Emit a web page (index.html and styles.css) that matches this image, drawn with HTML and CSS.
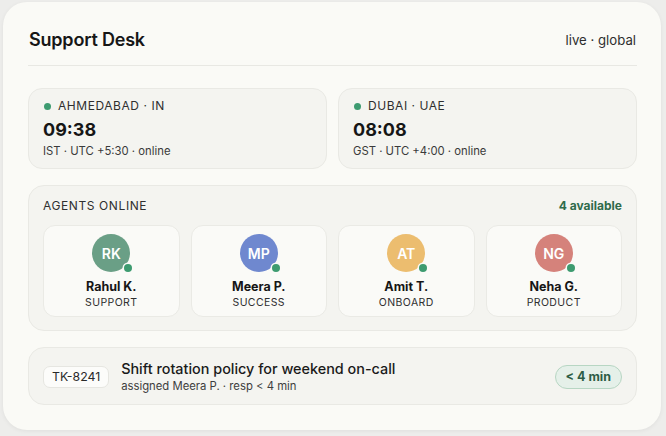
FILE: index.html
```html
<!DOCTYPE html>
<html>
<head>
<meta charset="utf-8">
<link rel="stylesheet" href="styles.css">
</head>
<body>
<div class="card">
  <div class="header">
    <h1 class="title">Support Desk</h1>
    <span class="meta">live · global</span>
  </div>
  <div class="cities">
    <div class="city">
      <div class="city-label"><span class="dot"></span>AHMEDABAD · IN</div>
      <div class="city-time">09:38</div>
      <div class="city-sub">IST · UTC +5:30 · online</div>
    </div>
    <div class="city">
      <div class="city-label"><span class="dot"></span>DUBAI · UAE</div>
      <div class="city-time">08:08</div>
      <div class="city-sub">GST · UTC +4:00 · online</div>
    </div>
  </div>
  <div class="agents">
    <div class="agents-head">
      <span class="agents-label">AGENTS ONLINE</span>
      <span class="agents-count">4 available</span>
    </div>
    <div class="agent-grid">
      <div class="agent">
        <div class="avatar av-green">RK<span class="status"></span></div>
        <div class="agent-name">Rahul K.</div>
        <div class="agent-role">SUPPORT</div>
      </div>
      <div class="agent">
        <div class="avatar av-blue">MP<span class="status"></span></div>
        <div class="agent-name">Meera P.</div>
        <div class="agent-role">SUCCESS</div>
      </div>
      <div class="agent">
        <div class="avatar av-yellow">AT<span class="status"></span></div>
        <div class="agent-name">Amit T.</div>
        <div class="agent-role">ONBOARD</div>
      </div>
      <div class="agent">
        <div class="avatar av-red">NG<span class="status"></span></div>
        <div class="agent-name">Neha G.</div>
        <div class="agent-role">PRODUCT</div>
      </div>
    </div>
  </div>
  <div class="ticket">
    <span class="ticket-id">TK-8241</span>
    <div class="ticket-body">
      <div class="ticket-title">Shift rotation policy for weekend on-call</div>
      <div class="ticket-sub">assigned Meera P. · resp &lt; 4 min</div>
    </div>
    <span class="ticket-badge">&lt; 4 min</span>
  </div>
</div>
</body>
</html>
```
FILE: styles.css
```css
* { box-sizing: border-box; }
html, body { margin: 0; }
body {
  background: #ededeb;
  font-family: Inter, "Noto Sans", "Liberation Sans", sans-serif;
  color: #1b1b1b;
  padding: 2px 5px 6px 3px;
  width: 666px;
  height: 436px;
}
.card {
  width: 658px;
  height: 428px;
  background: #fafaf6;
  border-radius: 24px;
  box-shadow: 0 1px 4px rgba(0,0,0,0.06);
  padding: 26px 24px 25px 25px;
  display: flex;
  flex-direction: column;
}
.header {
  display: flex;
  justify-content: space-between;
  align-items: center;
  padding: 0 1px 13px 1px;
  border-bottom: 1px solid #e8e8e3;
  height: 38px;
}
.title {
  margin: 0;
  font-size: 18px;
  font-weight: 600;
  line-height: 24px;
  letter-spacing: -0.2px;
  color: #161616;
}
.meta {
  font-size: 13.2px;
  color: #2e2e2e;
  line-height: 24px;
}
.cities {
  margin-top: 22px;
  display: grid;
  grid-template-columns: 1fr 1fr;
  gap: 11px;
}
.city {
  height: 81px;
  background: #f4f4f0;
  border: 1px solid #e9e9e4;
  border-radius: 14px;
  padding: 9px 14px;
}
.city-label {
  display: flex;
  align-items: center;
  font-size: 12px;
  line-height: 16px;
  letter-spacing: 0.55px;
  color: #2f2f2f;
}
.dot {
  width: 7px;
  height: 7px;
  border-radius: 50%;
  background: #3d9b70;
  margin: 0 7px 0 1px;
}
.city-time {
  margin-top: 5px;
  font-size: 18px;
  font-weight: 700;
  line-height: 22px;
  color: #161616;
}
.city-sub {
  margin-top: 2px;
  font-size: 11.3px;
  line-height: 16px;
  color: #3a3a3a;
}
.agents {
  margin-top: 16px;
  height: 146px;
  background: #f4f4f0;
  border: 1px solid #e9e9e4;
  border-radius: 16px;
  padding: 12px 14px 13px 14px;
}
.agents-head {
  display: flex;
  justify-content: space-between;
  align-items: center;
  line-height: 16px;
}
.agents-label {
  font-size: 12px;
  letter-spacing: 0.6px;
  color: #2f2f2f;
}
.agents-count {
  font-size: 12px;
  font-weight: 700;
  color: #2f6b4b;
}
.agent-grid {
  margin-top: 11px;
  display: grid;
  grid-template-columns: repeat(4, 1fr);
  gap: 11px;
}
.agent {
  height: 92px;
  background: #fafaf7;
  border: 1px solid #eaeae5;
  border-radius: 12px;
  padding-top: 8px;
  display: flex;
  flex-direction: column;
  align-items: center;
}
.avatar {
  position: relative;
  width: 38px;
  height: 38px;
  border-radius: 50%;
  color: #fff;
  font-size: 14px;
  font-weight: 600;
  display: flex;
  align-items: center;
  justify-content: center;
}
.av-green { background: #6a9f86; }
.av-blue { background: #6f88cf; }
.av-yellow { background: #ecbd6f; }
.av-red { background: #d5827b; }
.status {
  position: absolute;
  right: -2px;
  bottom: 0px;
  width: 8px;
  height: 8px;
  border-radius: 50%;
  background: #3d9b70;
  box-shadow: 0 0 0 1.5px #fafaf7;
}
.agent-name {
  margin-top: 7px;
  font-size: 12.5px;
  font-weight: 700;
  line-height: 16px;
  color: #161616;
}
.agent-role {
  margin-top: 1px;
  font-size: 10.5px;
  line-height: 14px;
  letter-spacing: 0.4px;
  color: #2f2f2f;
}
.ticket {
  margin-top: 16px;
  height: 58px;
  background: #f4f4f0;
  border: 1px solid #e9e9e4;
  border-radius: 16px;
  padding: 0 14px;
  display: flex;
  align-items: center;
}
.ticket-id {
  height: 22px;
  padding: 0 8px;
  background: #fcfcfa;
  border: 1px solid #e6e6e1;
  border-radius: 7px;
  font-size: 12.3px;
  line-height: 20px;
  color: #2a2a2a;
  margin-top: 2px;
}
.ticket-body {
  margin-left: 12px;
  flex: 1;
}
.ticket-title {
  font-size: 14.4px;
  font-weight: 500;
  line-height: 19px;
  color: #1a1a1a;
}
.ticket-sub {
  font-size: 11.3px;
  line-height: 16px;
  color: #3e3e3e;
}
.ticket-badge {
  height: 24px;
  padding: 0 10px;
  background: #e5f0e9;
  border: 1px solid #b7d6c3;
  border-radius: 12px;
  font-size: 12.5px;
  font-weight: 700;
  line-height: 22px;
  color: #2d5d45;
  margin-top: 2px;
}
```
